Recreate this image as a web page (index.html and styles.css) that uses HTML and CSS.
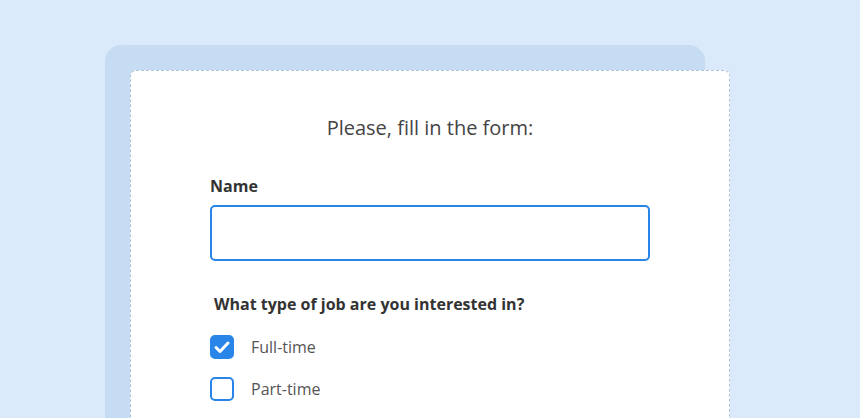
FILE: index.html
```html
<!DOCTYPE html>
<html>
<head>
<meta charset="utf-8">
<link rel="stylesheet" href="styles.css">
</head>
<body>
<div class="back">
  <div class="card">
    <h1 class="title">Please, fill in the form:</h1>
    <label class="label">Name</label>
    <div class="input"></div>
    <div class="question">What type of job are you interested in?</div>
    <div class="option first">
      <span class="box checked">
        <svg viewBox="0 0 24 24" width="24" height="24"><path d="M6 12.5l4 4 8-8.5" fill="none" stroke="#fff" stroke-width="3" stroke-linecap="round" stroke-linejoin="round"/></svg>
      </span>
      <span class="opt-text">Full-time</span>
    </div>
    <div class="option">
      <span class="box"></span>
      <span class="opt-text">Part-time</span>
    </div>
  </div>
</div>
</body>
</html>
```
FILE: styles.css
```css
html, body {
  margin: 0;
  padding: 0;
  height: 100%;
  overflow: hidden;
}
body {
  background: #dbeafb;
  font-family: "Open Sans", sans-serif;
}
.back {
  margin: 45px 0 0 105px;
  width: 575px;
  height: 348px;
  padding: 25px 0 0 25px;
  background: #c5dcf3;
  border-radius: 16px 16px 0 0;
}
.card {
  width: 519px;
  height: 347px;
  padding: 0 0 0 79px;
  background: #fff;
  border: 1px dashed #aec2da;
  border-bottom: none;
  border-radius: 6px 6px 0 0;
}
.title {
  margin: 43px 0 0 -79px;
  width: 598px;
  text-align: center;
  font-size: 20px;
  line-height: 28px;
  font-weight: 400;
  color: #444;
}
.label {
  display: block;
  margin-top: 33px;
  font-size: 16px;
  line-height: 22px;
  font-weight: 700;
  color: #333;
}
.input {
  margin-top: 8px;
  width: 436px;
  height: 52px;
  border: 2px solid #2a85e8;
  border-radius: 5px;
}
.question {
  margin: 32px 0 0 4px;
  font-size: 16px;
  line-height: 22px;
  font-weight: 700;
  color: #333;
}
.option {
  display: flex;
  align-items: center;
  gap: 17px;
  height: 24px;
  margin-top: 18px;
}
.option.first {
  margin-top: 20px;
}
.box {
  width: 20px;
  height: 20px;
  border: 2px solid #2a85e8;
  border-radius: 5px;
  display: flex;
  align-items: center;
  justify-content: center;
  flex: none;
}
.box.checked {
  background: #2a85e8;
}
.box svg {
  flex: none;
}
.opt-text {
  font-size: 16px;
  line-height: 22px;
  color: #555;
}
```
